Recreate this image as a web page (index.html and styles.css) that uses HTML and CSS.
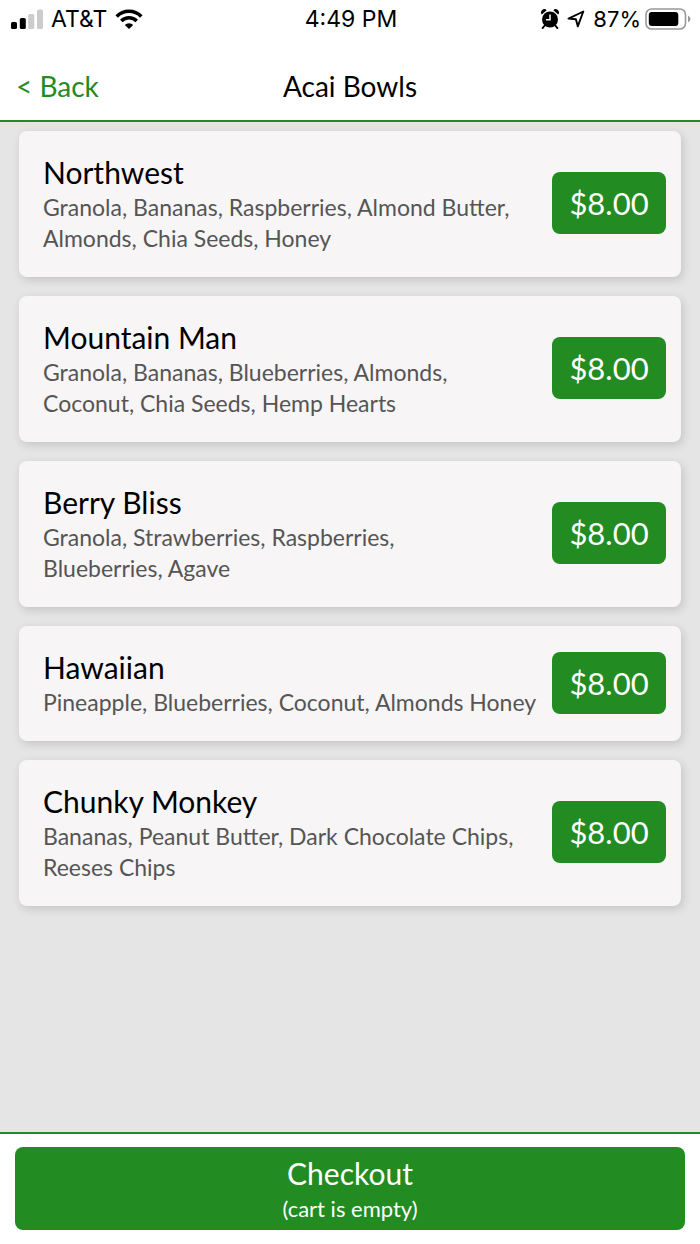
FILE: index.html
```html
<!DOCTYPE html>
<html lang="en">
<head>
<meta charset="utf-8">
<meta name="viewport" content="width=device-width, initial-scale=1">
<title>Acai Bowls</title>
<link rel="stylesheet" href="styles.css">
</head>
<body>
<div class="status">
  <div class="status-left">
    <svg class="signal" viewBox="0 0 32 20" aria-hidden="true"><rect x="0" y="13" width="6" height="7" rx="1.6"/><rect x="8.8" y="9" width="6" height="11" rx="1.6"/><rect class="dim" x="17.3" y="5" width="6" height="15" rx="1.6"/><rect class="dim" x="26" y="0.5" width="6" height="19.5" rx="1.6"/></svg>
    <span>AT&amp;T</span>
    <svg class="wifi" viewBox="0 0 28 20" aria-hidden="true"><path d="M1.7 7.4a17.4 17.4 0 0 1 24.6 0M6.3 12a10.9 10.9 0 0 1 15.4 0" fill="none" stroke="#000" stroke-width="3.6"/><path d="M14 20l-4.2-4.1a5.9 5.9 0 0 1 8.4 0z"/></svg>
  </div>
  <time class="clock">4:49 PM</time>
  <div class="status-right">
    <svg class="alarm" viewBox="0 0 18 20" aria-hidden="true"><circle cx="9" cy="10.5" r="8"/><path d="M.8 5.6A3.3 3.3 0 0 1 5.7 1.2zM17.2 5.6A3.3 3.3 0 0 0 12.3 1.2z"/><path d="M3.7 16.5L1.7 19M14.3 16.5l2 2.5" stroke="#000" stroke-width="2" stroke-linecap="round"/><path d="M9 5.4V10.7H5" fill="none" stroke="#fff" stroke-width="1.5"/></svg>
    <svg class="arrow" viewBox="0 0 18 18" aria-hidden="true"><path d="M1.5 8.6L16.3 1.5 10.8 16.3 8.9 9.3z" fill="none" stroke="#000" stroke-width="1.9" stroke-linejoin="round"/></svg>
    <span class="charge">87% <svg class="battery" viewBox="0 0 46 22" aria-hidden="true"><rect x="1" y="1" width="39.5" height="20" rx="5.5" fill="none" stroke="#999" stroke-width="1.6"/><rect x="3.8" y="4" width="29.5" height="14" rx="3"/><path d="M43 7.5q5 3.5 0 7z" fill="#999"/></svg></span>
  </div>
</div>
<header class="header">
  <a class="back" href="#">&lt; Back</a>
  <h1 class="heading">Acai Bowls</h1>
</header>
<main class="menu">
  <article class="card">
    <div class="info"><h2 class="name">Northwest</h2><p class="desc">Granola, Bananas, Raspberries, Almond Butter, <br>Almonds, Chia Seeds, Honey</p></div>
    <button class="price" type="button">$8.00</button>
  </article>
  <article class="card">
    <div class="info"><h2 class="name">Mountain Man</h2><p class="desc">Granola, Bananas, Blueberries, Almonds, <br>Coconut, Chia Seeds, Hemp Hearts</p></div>
    <button class="price" type="button">$8.00</button>
  </article>
  <article class="card">
    <div class="info"><h2 class="name">Berry Bliss</h2><p class="desc">Granola, Strawberries, Raspberries, <br>Blueberries, Agave</p></div>
    <button class="price" type="button">$8.00</button>
  </article>
  <article class="card">
    <div class="info"><h2 class="name">Hawaiian</h2><p class="desc">Pineapple, Blueberries, Coconut, Almonds Honey</p></div>
    <button class="price" type="button">$8.00</button>
  </article>
  <article class="card">
    <div class="info"><h2 class="name">Chunky Monkey</h2><p class="desc">Bananas, Peanut Butter, Dark Chocolate Chips, <br>Reeses Chips</p></div>
    <button class="price" type="button">$8.00</button>
  </article>
</main>
<footer class="footer">
  <button class="checkout" type="button"><span class="checkout-title">Checkout</span><span class="checkout-note">(cart is empty)</span></button>
</footer>
</body>
</html>
```
FILE: styles.css
```css
* { box-sizing: border-box; }
body {
  margin: 0;
  min-height: 100vh;
  display: flex;
  flex-direction: column;
  background: #fff;
  color: #000;
  font-family: Lato, "Open Sans", sans-serif;
}
h1, h2, p { margin: 0; font-weight: 400; }
button { border: 0; font-family: inherit; color: #fff; background: #228b22; cursor: pointer; }

.status {
  display: grid;
  grid-template-columns: 1fr auto 1fr;
  align-items: center;
  height: 38px;
  padding: 0 9px 0 11px;
  font: 400 23px/28px Inter, sans-serif;
}
.status-left, .status-right { display: flex; align-items: center; gap: 8px; }
.status-right { justify-content: flex-end; }
.signal { width: 32px; height: 20px; }
.dim { fill: #ccc; }
.wifi { width: 28px; height: 20px; }
.alarm { width: 18px; height: 20px; }
.arrow { width: 18px; height: 18px; }
.charge { display: flex; align-items: center; gap: 4px; font-size: 22px; }
.battery { width: 46px; height: 22px; }

.header {
  display: grid;
  grid-template-columns: 1fr auto 1fr;
  align-items: center;
  padding: 28px 16px 14px;
  border-bottom: 2px solid #228b22;
}
.back, .heading { font-size: 28px; line-height: 40px; }
.back { color: #228b22; text-decoration: none; }

.menu {
  flex: 1;
  display: flex;
  flex-direction: column;
  gap: 19px;
  padding: 9px 19px 19px;
  background: #e5e5e5;
}
.card {
  display: flex;
  align-items: center;
  gap: 8px;
  padding: 21px 15px 23px 24px;
  border-radius: 8px;
  background: #f7f5f6;
  box-shadow: 2px 3px 10px rgba(0, 0, 0, 0.15);
}
.info { flex: 1; min-width: 0; }
.name { font-size: 30px; line-height: 40px; }
.desc { color: #555; font-size: 23px; line-height: 31px; }
.price {
  flex: none;
  width: 114px;
  height: 62px;
  padding: 0;
  border-radius: 8px;
  font-size: 31px;
  line-height: 40px;
}

.footer { padding: 13px 15px 14px; border-top: 2px solid #228b22; }
.checkout {
  display: flex;
  flex-direction: column;
  align-items: center;
  width: 100%;
  padding: 6px 16px 5px;
  border-radius: 8px;
}
.checkout-title { font-size: 30px; line-height: 40px; }
.checkout-note { font-size: 22px; line-height: 32px; }
```
